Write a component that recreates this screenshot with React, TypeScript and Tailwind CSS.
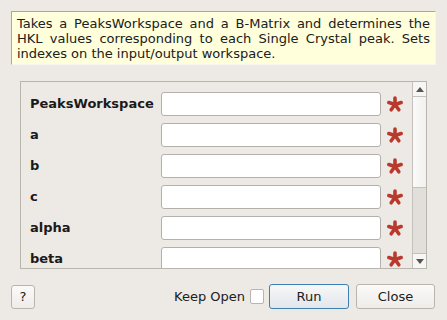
import React from "react";

const FIELDS = ["PeaksWorkspace", "a", "b", "c", "alpha", "beta"];

// ── Required-field marker ─────────────────────────────────────────────────────
function Star() {
  const arms = [0, 72, 144, 216, 288];
  return (
    <svg width="18" height="18" viewBox="0 0 18 18" className="shrink-0">
      {arms.map((a) => {
        const r = (a - 90) * (Math.PI / 180);
        return (
          <line
            key={a}
            x1="9"
            y1="9.5"
            x2={9 + Math.cos(r) * 6.5}
            y2={9.5 + Math.sin(r) * 6.5}
            stroke="#b93a2c"
            strokeWidth="3.6"
            strokeLinecap="round"
          />
        );
      })}
    </svg>
  );
}

function Row({ label }: { label: string }) {
  return (
    <div className="flex items-center h-[24px] shrink-0">
      <div className="w-[131px] font-bold text-[13px] text-[#1a1a1a]">{label}</div>
      <div className="w-[220px] h-[24px] bg-white border border-[#b4b0ab] rounded-[3px]" />
      <div className="ml-[5px]"><Star /></div>
    </div>
  );
}

export default function App() {
  return (
    <div
      className="w-[447px] h-[320px] bg-[#edeae6] flex flex-col text-[13px] text-[#202020] overflow-hidden"
      style={{ fontFamily: '"DejaVu Sans", sans-serif' }}
    >
      {/* Description */}
      <div className="mx-[11px] mt-[11px] h-[54px] bg-[#ffffdc] border-l border-t border-[#a9a7a2] border-r border-b border-r-[#f6f5f2] border-b-[#f6f5f2] px-[5px] pt-[4px] leading-[15px] text-justify">
        Takes a PeaksWorkspace and a B-Matrix and determines the HKL values corresponding to each Single Crystal peak. Sets indexes on the input/output workspace.
      </div>

      {/* Property scroll area */}
      <div className="ml-[20px] mt-[16px] w-[407px] h-[188px] border border-[#b8b4ae] flex">
        <div className="flex-1 overflow-hidden pl-[9px] pt-[10px] flex flex-col gap-[7px]">
          {FIELDS.map((f) => <Row key={f} label={f} />)}
        </div>
        <div className="w-[14px] flex flex-col border-l border-[#c4c0bb] bg-[#e2dfdb]">
          <div className="h-[15px] bg-[#f7f6f4] border-b border-[#c4c0bb] flex items-center justify-center">
            <svg width="8" height="5" viewBox="0 0 8 5"><path d="M0 5 L4 0 L8 5 Z" fill="#555" /></svg>
          </div>
          <div className="h-[91px] bg-gradient-to-r from-[#fafaf9] to-[#f2f1ef] border-b border-[#c4c0bb]" />
          <div className="flex-1" />
          <div className="h-[15px] bg-[#f7f6f4] border-t border-[#c4c0bb] flex items-center justify-center">
            <svg width="8" height="5" viewBox="0 0 8 5"><path d="M0 0 L8 0 L4 5 Z" fill="#555" /></svg>
          </div>
        </div>
      </div>

      {/* Buttons */}
      <div className="mt-[15px] flex items-center pl-[11px] pr-[12px]">
        <button className="w-[24px] h-[24px] rounded-[3px] border border-[#b8b4ae] bg-gradient-to-b from-[#fbfaf9] to-[#eeece9] text-[13px] flex items-center justify-center">
          ?
        </button>
        <div className="flex-1" />
        <span className="text-[13px] mr-[5px]">Keep Open</span>
        <div className="w-[14px] h-[15px] bg-white border border-[#b8b4ae] rounded-[2px] mr-[5px]" />
        <button className="w-[80px] h-[25px] rounded-[3px] border border-[#3d7fb0] bg-gradient-to-b from-[#f6f7f8] to-[#e3e7eb] text-[13px]">
          Run
        </button>
        <button className="ml-[7px] w-[79px] h-[25px] rounded-[3px] border border-[#b8b4ae] bg-gradient-to-b from-[#fbfaf9] to-[#eeece9] text-[13px]">
          Close
        </button>
      </div>
    </div>
  );
}
